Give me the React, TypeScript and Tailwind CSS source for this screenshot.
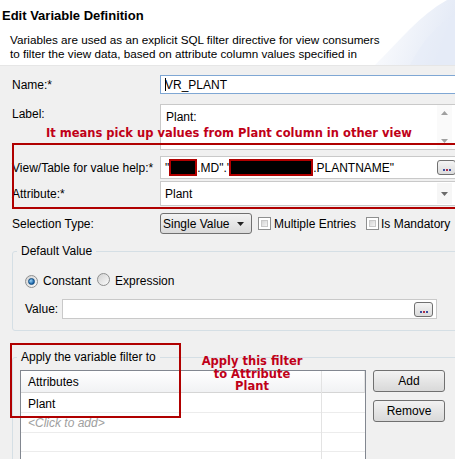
import React from "react";

const Checkbox = () => (
  <span className="inline-block w-[13px] h-[13px] border border-[#8e8f8f] bg-white p-[2px]">
    <span className="block w-full h-full bg-gradient-to-br from-[#d6d6d6] to-[#f4f4f4] border border-[#c8c8c8]" />
  </span>
);

const Radio = ({ checked }: { checked?: boolean }) => (
  <span className="inline-flex items-center justify-center w-[13px] h-[13px] rounded-full border border-[#8e8f8f] bg-gradient-to-br from-[#d2d2d2] to-[#fbfbfb]">
    {checked && (
      <span className="block w-[7px] h-[7px] rounded-full bg-[radial-gradient(circle_at_35%_35%,#9ad3f7,#1b64a8_70%)] border border-[#0f4a80]" />
    )}
  </span>
);

const DotsButton = () => (
  <span className="inline-flex items-end justify-center gap-[1px] w-[19px] h-[15px] pb-[3px] rounded-[3px] border border-[#707070] bg-gradient-to-b from-[#f4f4f4] to-[#dcdcdc]">
    <span className="w-[2px] h-[2px] bg-[#3a4fa0]" />
    <span className="w-[2px] h-[2px] bg-[#b0304a]" />
    <span className="w-[2px] h-[2px] bg-[#3a4fa0]" />
  </span>
);

const Arrow = () => (
  <svg width="7" height="4" viewBox="0 0 7 4">
    <path d="M0 0 H7 L3.5 4 Z" fill="#222" />
  </svg>
);

const Redacted = ({ w }: { w: string }) => (
  <span className={`inline-block ${w} h-[17px] bg-black border-2 border-[#b00000] align-middle`} />
);

const Label = ({ children }: { children: React.ReactNode }) => (
  <span className="w-[148px] shrink-0">{children}</span>
);

export default function App() {
  return (
    <div className="relative w-[455px] h-[459px] overflow-hidden bg-[#f0f0f0] text-[12px] leading-[14px] text-black font-['Liberation_Sans',Arial,sans-serif]">
      {/* header */}
      <div className="relative h-[66px] bg-white border-b border-[#e6e6e6] pl-[2px] pt-[8px]">
        <svg className="absolute right-0 top-0" width="90" height="65" viewBox="0 0 90 65">
          <defs>
            <linearGradient id="sw" x1="0" y1="0" x2="1" y2="0.3">
              <stop offset="0" stopColor="#ffffff" />
              <stop offset="1" stopColor="#e4eaf6" />
            </linearGradient>
          </defs>
          <path d="M90 0 V65 H10 C35 40 55 15 82 0 Z" fill="url(#sw)" />
          <path d="M90 15 V65 H45 C58 40 72 25 90 15 Z" fill="#e6ecf7" opacity="0.5" />
        </svg>
        <h1 className="relative text-[13px] font-bold leading-[16px]">Edit Variable Definition</h1>
        <p className="relative mt-[9px] pl-[8px] leading-[14px] text-[11.7px]">
          Variables are used as an explicit SQL filter directive for view consumers
          <br />
          to filter the view data, based on attribute column values specified in
        </p>
      </div>

      <div className="pl-[12px]">
        {/* name */}
        <div className="mt-[9px] flex items-center h-[19px]">
          <Label>Name:*</Label>
          <div className="w-[300px] h-[19px] shrink-0 bg-white border border-[#7fa7d4] flex items-center pl-[4px]">
            <span className="w-px h-[13px] bg-black" />
            <span className="-ml-px">VR_PLANT</span>
          </div>
        </div>

        {/* label */}
        <div className="mt-[10px] flex items-start">
          <span className="w-[148px] shrink-0 pt-[3px]">Label:</span>
          <div className="w-[300px] h-[46px] shrink-0 bg-white border border-[#c9c9c9] flex">
            <span className="w-[276px] pl-[5px] pt-[5px]">Plant:</span>
            <div className="w-[15px] flex flex-col items-center justify-between py-[6px] bg-[#fafafa]">
              <svg width="7" height="4" viewBox="0 0 7 4">
                <path d="M0 4 H7 L3.5 0 Z" fill="#a0a0a0" />
              </svg>
              <svg width="7" height="4" viewBox="0 0 7 4">
                <path d="M0 0 H7 L3.5 4 Z" fill="#a0a0a0" />
              </svg>
            </div>
          </div>
        </div>

        {/* view/table */}
        <div className="mt-[6px] flex items-center h-[23px]">
          <Label>View/Table for value help:*</Label>
          <div className="w-[300px] h-[23px] shrink-0 bg-white border border-[#c9c9c9] flex items-center pl-[4px]">
            <span>"</span>
            <Redacted w="w-[28px]" />
            <span>.MD".'</span>
            <Redacted w="w-[84px]" />
            <span>.PLANTNAME"</span>
            <span className="ml-[43px]">
              <DotsButton />
            </span>
          </div>
        </div>

        {/* attribute */}
        <div className="mt-[2px] flex items-center h-[25px]">
          <Label>Attribute:*</Label>
          <div className="w-[300px] h-[25px] shrink-0 bg-white border border-[#c9c9c9] flex items-center pl-[4px]">
            <span className="w-[272px]">Plant</span>
            <span className="w-[15px] h-[21px] flex items-center justify-center bg-[#f6f6f6]">
              <svg width="7" height="4" viewBox="0 0 7 4">
                <path d="M0 0 H7 L3.5 4 Z" fill="#6a6a6a" />
              </svg>
            </span>
          </div>
        </div>

        {/* selection type */}
        <div className="mt-[7px] flex items-center h-[21px]">
          <Label>Selection Type:</Label>
          <div className="w-[92px] h-[21px] shrink-0 rounded-[3px] border border-[#707070] bg-gradient-to-b from-[#f3f3f3] to-[#dadada] flex items-center pl-[2px] pr-[7px] justify-between">
            <span>Single Value</span>
            <Arrow />
          </div>
          <div className="w-[108px] ml-[6px] flex items-center gap-[3px]">
            <Checkbox />
            <span>Multiple Entries</span>
          </div>
          <div className="flex items-center gap-[2px]">
            <Checkbox />
            <span className="whitespace-nowrap">Is Mandatory</span>
          </div>
        </div>

        {/* default value */}
        <fieldset className="mt-[10px] w-[460px] border border-[#d5dfe5] rounded-[3px]">
          <legend className="ml-[4px] px-[4px] leading-[14px]">Default Value</legend>
          <div className="mt-[15px] pl-[12px] flex items-center h-[16px]">
            <Radio checked />
            <span className="ml-[5px]">Constant</span>
            <span className="ml-[6px]">
              <Radio />
            </span>
            <span className="ml-[5px]">Expression</span>
          </div>
          <div className="mt-[10px] mb-[11px] pl-[12px] flex items-center h-[20px]">
            <span className="w-[37px]">Value:</span>
            <div className="w-[375px] h-[20px] bg-white border border-[#c9c9c9] flex items-center justify-end pr-[3px]">
              <DotsButton />
            </div>
          </div>
        </fieldset>

        {/* apply filter */}
        <fieldset className="mt-[19px] w-[460px] h-[140px] border border-[#d5dfe5] rounded-[3px]">
          <legend className="ml-[4px] px-[4px] leading-[14px]">Apply the variable filter to</legend>
          <div className="mt-[6px] ml-[7px] flex items-start gap-[7px]">
            <div className="w-[346px] h-[100px] bg-white border border-[#828790] flex">
              <div className="w-[301px] border-r border-[#e3e3e3]">
                <div className="h-[22px] flex items-center pl-[7px] bg-gradient-to-b from-white to-[#f1f2f4] border-b border-[#d5d5d5]">
                  Attributes
                </div>
                <div className="h-[20px] flex items-center pl-[7px] pt-[2px] border-b border-[#ececec]">Plant</div>
                <div className="h-[20px] flex items-center pl-[7px] border-b border-[#ececec] italic text-[#a0a0a0]">
                  &lt;Click to add&gt;
                </div>
                <div className="h-[19px] border-b border-[#ececec]" />
              </div>
              <div className="w-[43px]">
                <div className="h-[22px] bg-gradient-to-b from-white to-[#f1f2f4] border-b border-[#d5d5d5] border-r border-r-[#e3e3e3]" />
                <div className="h-[20px] border-b border-[#ececec]" />
                <div className="h-[20px] border-b border-[#ececec]" />
                <div className="h-[19px] border-b border-[#ececec]" />
              </div>
            </div>
            <div className="flex flex-col gap-[8px]">
              <button className="w-[72px] h-[22px] rounded-[3px] border border-[#707070] bg-gradient-to-b from-[#f2f2f2] to-[#d9d9d9] text-[12px]">
                Add
              </button>
              <button className="w-[72px] h-[22px] rounded-[3px] border border-[#707070] bg-gradient-to-b from-[#f2f2f2] to-[#d9d9d9] text-[12px]">
                Remove
              </button>
            </div>
          </div>
        </fieldset>
      </div>

      {/* annotations */}
      <div className="absolute left-[46px] top-[126px] leading-[14px] font-['DejaVu_Sans',sans-serif] font-bold text-[11.5px] text-[#c00018] whitespace-nowrap">
        It means pick up values from Plant column in other view
      </div>
      <div className="absolute left-[12px] top-[143px] w-[450px] h-[66px] border-2 border-[#b00000]" />
      <div className="absolute left-[10px] top-[343px] w-[171px] h-[75px] border-2 border-[#b00000]" />
      <div className="absolute left-[182px] top-[355px] w-[140px] text-center leading-[12.5px] font-['DejaVu_Sans',sans-serif] font-bold text-[11.5px] text-[#c00018]">
        Apply this filter
        <br />
        to Attribute
        <br />
        Plant
      </div>
    </div>
  );
}
